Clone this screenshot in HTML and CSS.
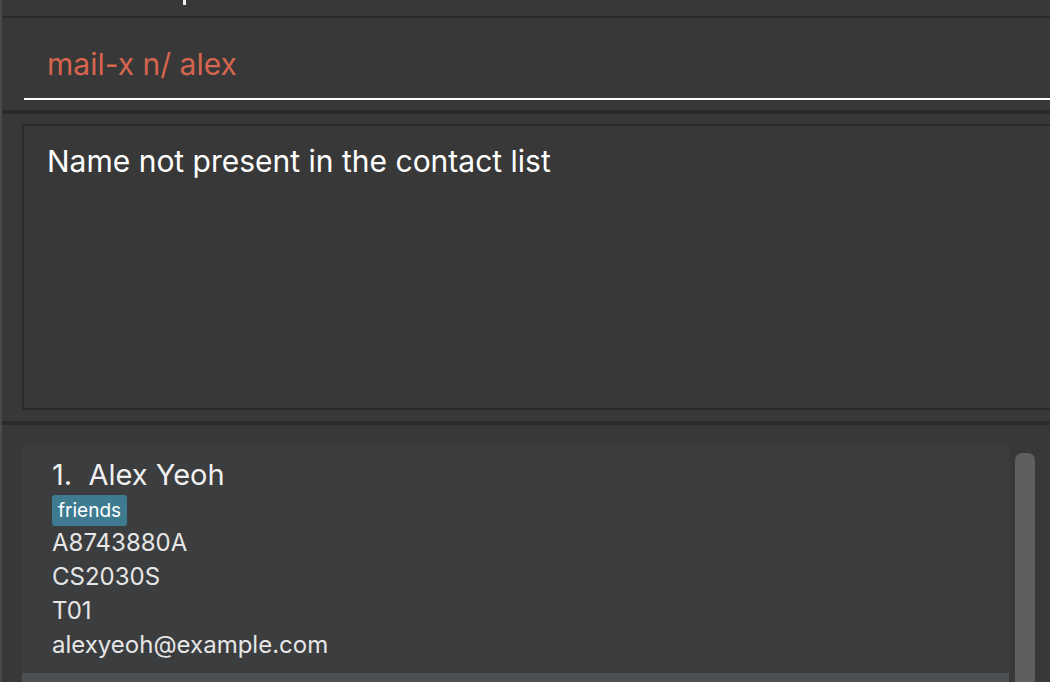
FILE: index.html
```html
<!DOCTYPE html>
<html>
<head>
<meta charset="utf-8">
<link rel="stylesheet" href="styles.css">
</head>
<body>
<div class="window">
  <div class="menubar"><span class="menu-mark"></span></div>
  <div class="command-section">
    <div class="command-box">
      <span class="command-text">mail-x n/ alex</span>
    </div>
  </div>
  <div class="sep"></div>
  <div class="result-section">
    <div class="result-box">
      <span class="result-text">Name not present in the contact list</span>
    </div>
  </div>
  <div class="sep"></div>
  <div class="list-section">
    <div class="list">
      <div class="card">
        <div class="name">1.&nbsp; Alex Yeoh</div>
        <div class="tags"><span class="tag">friends</span></div>
        <div class="field">A8743880A</div>
        <div class="field">CS2030S</div>
        <div class="field">T01</div>
        <div class="field">alexyeoh@example.com</div>
      </div>
      <div class="card card-alt"></div>
    </div>
    <div class="scroll-track"><div class="scroll-thumb"></div></div>
  </div>
</div>
</body>
</html>
```
FILE: styles.css
```css
html, body {
  margin: 0;
  padding: 0;
  height: 100%;
  overflow: hidden;
  background: #383838;
  font-family: Inter, "Open Sans", "Liberation Sans", sans-serif;
}
.window {
  height: 682px;
  border-left: 2px solid #4a4a4a;
  display: flex;
  flex-direction: column;
  background: #383838;
}
.menubar {
  height: 16px;
  border-bottom: 2px solid #2b2b2b;
  overflow: hidden;
  padding-left: 181px;
  box-sizing: content-box;
}
.menu-mark {
  display: block;
  width: 3px;
  height: 5px;
  background: #f0f0f0;
}
.command-section {
  height: 92px;
  padding-left: 22px;
  box-sizing: border-box;
}
.command-box {
  height: 82px;
  border-bottom: 2px solid #ffffff;
  box-sizing: border-box;
  padding-left: 23px;
  padding-top: 29px;
}
.command-text {
  color: #d6654f;
  font-size: 30px;
  line-height: 34px;
  display: block;
}
.sep {
  height: 4px;
  background: #2b2b2b;
  flex: none;
}
.result-section {
  height: 307px;
  padding: 10px 0 11px 20px;
  box-sizing: border-box;
}
.result-box {
  height: 100%;
  border: 2px solid #2b2b2b;
  border-right: none;
  box-sizing: border-box;
  padding: 17px 0 0 23px;
}
.result-text {
  color: #ffffff;
  font-size: 30px;
  line-height: 36px;
}
.list-section {
  flex: 1;
  display: flex;
  padding: 20px 0 0 20px;
  overflow: hidden;
  min-height: 0;
}
.list {
  width: 987px;
  display: flex;
  flex-direction: column;
}
.card {
  background: #3c3d3f;
  padding: 12px 0 0 30px;
  height: 228px;
  box-sizing: border-box;
  color: #e6e6e6;
  flex: none;
}
.card-alt {
  background: #4b5053;
  height: 40px;
}
.name {
  font-size: 29px;
  line-height: 36px;
  color: #f0f0f0;
}
.tags {
  margin-top: 2px;
  display: flex;
}
.tag {
  background: #3e7b91;
  color: #ffffff;
  font-size: 19px;
  line-height: 31px;
  padding: 0 6px;
  border-radius: 3px;
}
.field {
  font-size: 24px;
  line-height: 34px;
  color: #e6e6e6;
}
.scroll-track {
  width: 20px;
  margin-left: 6px;
  padding-top: 8px;
}
.scroll-thumb {
  height: 400px;
  background: #5f5f5f;
  border-radius: 7px;
}
```
